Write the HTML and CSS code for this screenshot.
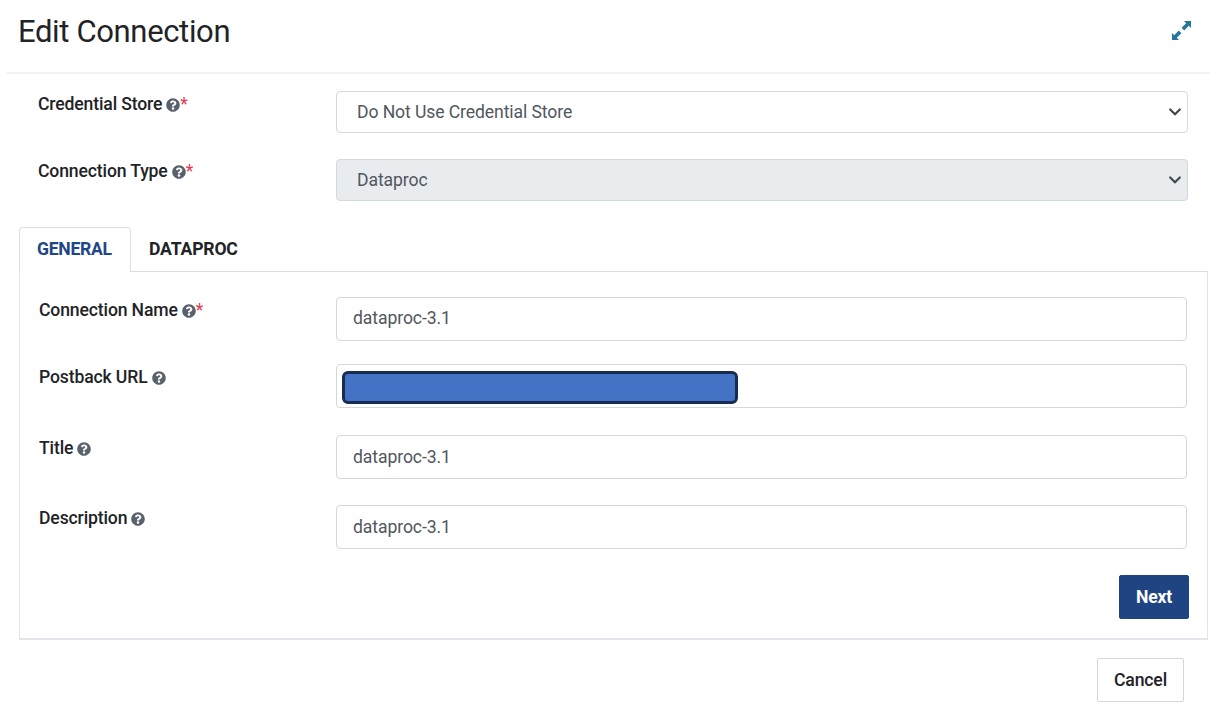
FILE: index.html
```html
<!DOCTYPE html>
<html lang="en">
<head>
<meta charset="utf-8">
<title>Edit Connection</title>
<link rel="stylesheet" href="styles.css">
</head>
<body>
<svg class="defs" width="0" height="0" aria-hidden="true">
  <symbol id="help" viewBox="0 0 512 512"><path d="M504 256c0 136.997-111.043 248-248 248S8 392.997 8 256C8 119.083 119.043 8 256 8s248 111.083 248 248zM262.655 90c-54.497 0-89.255 22.957-116.549 63.758-3.536 5.286-2.353 12.415 2.715 16.258l34.699 26.31c5.205 3.947 12.621 3.008 16.665-2.122 17.864-22.658 30.113-35.797 57.303-35.797 20.429 0 45.698 13.148 45.698 32.958 0 14.976-12.363 22.667-32.534 33.976C247.128 238.528 216 254.941 216 296v4c0 6.627 5.373 12 12 12h56c6.627 0 12-5.373 12-12v-1.333c0-28.462 83.186-29.647 83.186-106.667 0-58.002-60.165-102-116.531-102zM256 338c-25.365 0-46 20.635-46 46 0 25.364 20.635 46 46 46s46-20.636 46-46c0-25.365-20.635-46-46-46z"/></symbol>
  <symbol id="chevron" viewBox="0 0 12 8"><path d="M1.2 1.4L6 6.2l4.800-4.800" fill="none" stroke="#3f464d" stroke-width="2.100" stroke-linecap="round"/></symbol>
</svg>
<div class="dialog">
  <header class="header">
    <h1 class="title">Edit Connection</h1>
    <svg class="expand" viewBox="0 0 19 19" aria-label="Expand"><path d="M12 0H19v7l-2.200-2.200-4.600 4.600-2.600-2.600L14.200 2.200zM7 19H0v-7l2.200 2.200L6.800 9.600 9.400 12.200 4.800 16.800z"/></svg>
  </header>

  <div class="row row-store">
    <label class="label">Credential Store<svg class="help"><use href="#help"/></svg><span class="required">*</span></label>
    <div class="select">Do Not Use Credential Store<svg class="chevron"><use href="#chevron"/></svg></div>
  </div>
  <div class="row row-type">
    <label class="label">Connection Type<svg class="help"><use href="#help"/></svg><span class="required">*</span></label>
    <div class="select disabled">Dataproc<svg class="chevron"><use href="#chevron"/></svg></div>
  </div>

  <nav class="tabs">
    <div class="tab active">GENERAL</div>
    <div class="tab">DATAPROC</div>
  </nav>
  <section class="panel">
    <div class="field">
      <label class="label">Connection Name<svg class="help"><use href="#help"/></svg><span class="required">*</span></label>
      <div class="input">dataproc-3.1</div>
    </div>
    <div class="field field-url">
      <label class="label">Postback URL<svg class="help"><use href="#help"/></svg></label>
      <div class="input masked"><div class="mask"></div></div>
    </div>
    <div class="field">
      <label class="label">Title<svg class="help"><use href="#help"/></svg></label>
      <div class="input">dataproc-3.1</div>
    </div>
    <div class="field">
      <label class="label">Description<svg class="help"><use href="#help"/></svg></label>
      <div class="input">dataproc-3.1</div>
    </div>
    <div class="actions"><button class="button primary">Next</button></div>
  </section>
  <footer class="footer"><button class="button">Cancel</button></footer>
</div>
</body>
</html>
```
FILE: styles.css
```css
* { box-sizing: border-box; }
body {
  margin: 0;
  background: #fff;
  color: #212326;
  font: 17.6px/20px Roboto, "Liberation Sans", sans-serif;
  letter-spacing: -0.1px;
}
.defs { display: block; }
.dialog { width: 1230px; height: 712px; overflow: hidden; }
.header {
  display: flex;
  justify-content: space-between;
  align-items: flex-start;
  height: 74px;
  margin: 0 20px 0 7px;
  padding: 11px 19px 0 11px;
  border-bottom: 2px solid #f2f2f3;
}
.title { margin: 1px 0 0; font-size: 31px; line-height: 40px; font-weight: 400; letter-spacing: -0.35px; }
.expand { width: 19px; height: 19px; margin-top: 10px; fill: #247799; }
.row, .field {
  display: grid;
  grid-template-columns: 298px 1fr;
  align-items: start;
}
.row { margin: 0 42px 0 38px; }
.row-store { margin-top: 17px; }
.row-type { margin-top: 26px; }
.label { display: flex; align-items: center; padding-top: 3px; font-weight: 500; letter-spacing: -0.14px; }
.row-type .label { padding-top: 2px; }
.help { width: 14px; height: 14px; margin: 1px 0 0 4px; fill: #59626c; }
.required { color: #e8384f; font-weight: 400; }
.select {
  display: flex;
  align-items: center;
  justify-content: space-between;
  height: 42px;
  padding: 0 6px 0 20px;
  border: 1px solid #d3d8df;
  border-radius: 4px;
  color: #50575e;
}
.select.disabled { background: #e9ecef; }
.chevron { width: 12px; height: 8px; }
.tabs { display: flex; height: 44px; margin: 26px 0 0 19px; }
.tab { padding: 12px 18px 0; font-weight: 700; letter-spacing: -0.17px; }
.tab.active {
  position: relative;
  width: 112px;
  height: 45px;
  padding: 11px 0 0 17px;
  border: 1px solid #dcdfe4;
  border-bottom: 0;
  border-radius: 4px 4px 0 0;
  background: #fff;
  color: #1f4788;
  letter-spacing: -0.3px;
}
.panel {
  height: 369px;
  margin: 0 22px 0 19px;
  padding: 25px 18px 0 19px;
  border: 1px solid #e1e4e8;
  border-top-color: #dadde2;
  border-bottom: 2px solid #e2e5e9;
}
.field { grid-template-columns: 297px 851px; margin-bottom: 26px; }
.field:first-child { margin-bottom: 23px; }
.field-url { margin-bottom: 27px; }
.input {
  height: 44px;
  padding: 11px 16px;
  border: 1px solid #d3d8df;
  border-radius: 4px;
  color: #50575e;
}
.field:first-child .input { padding-top: 10px; }
.masked { padding: 6px 5px; }
.mask { width: 396px; height: 33px; border: 3px solid #172c51; border-radius: 6px; background: #4472c4; }
.actions { display: flex; justify-content: flex-end; }
.button {
  width: 87px;
  height: 44px;
  padding: 0;
  border: 1px solid #d3d8df;
  border-radius: 2px;
  background: #fff;
  color: #212326;
  font: 500 17.6px/20px Roboto, "Liberation Sans", sans-serif;
  letter-spacing: -0.15px;
}
.primary { width: 70px; border-color: #1e4482; background: #1e4482; color: #fff; font-weight: 700; }
.footer { display: flex; justify-content: flex-end; padding: 18px 46px 0 0; }
```
